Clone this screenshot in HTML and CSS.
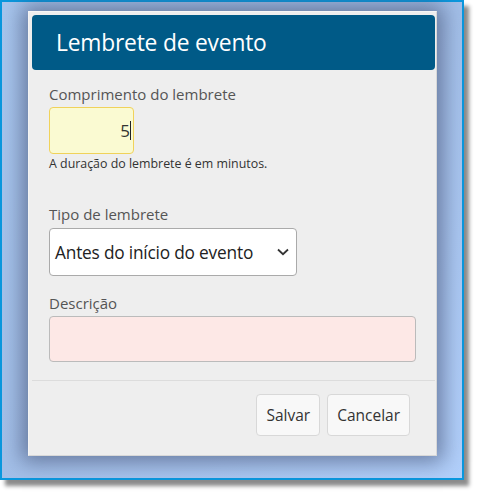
FILE: index.html
```html
<!DOCTYPE html>
<html lang="pt">
<head>
<meta charset="utf-8">
<title>Lembrete de evento</title>
<link rel="stylesheet" href="styles.css">
</head>
<body>
<div class="frame">
  <div class="dialog">
    <div class="dialog-header">Lembrete de evento</div>
    <div class="dialog-body">
      <label class="field-label">Comprimento do lembrete</label>
      <div class="num-input"><span class="num-value">5</span><span class="caret"></span></div>
      <div class="help">A duração do lembrete é em minutos.</div>
      <label class="field-label label-type">Tipo de lembrete</label>
      <div class="select">
        <span class="select-text">Antes do início do evento</span>
        <svg class="chevron" width="12" height="8" viewBox="0 0 12 8"><path d="M1 1.5 L6 6.2 L11 1.5" fill="none" stroke="#333" stroke-width="1.8"/></svg>
      </div>
      <label class="field-label label-desc">Descrição</label>
      <div class="textarea"></div>
    </div>
    <div class="separator"></div>
    <div class="dialog-footer">
      <button class="btn">Salvar</button>
      <button class="btn">Cancelar</button>
    </div>
  </div>
</div>
</body>
</html>
```

FILE: styles.css
```css
html, body {
  margin: 0;
  padding: 0;
  background: #ffffff;
}
body {
  font-family: "Open Sans", "Noto Sans", sans-serif;
  width: 478px;
  height: 494px;
  overflow: hidden;
}
.frame {
  box-sizing: border-box;
  width: 464px;
  height: 480px;
  border: 2px solid #0a98de;
  background: linear-gradient(135deg, #a8c6ee 0%, #a3bfe8 50%, #b2d0fb 100%);
  box-shadow: 5px 6px 4px rgba(0, 0, 0, 0.45);
  padding: 9px 0 0 26px;
}
.dialog {
  box-sizing: border-box;
  width: 409px;
  height: 445px;
  background: #eeeeee;
  border: 1px solid #d8d8d8;
  border-top-color: #f6f6f6;
  border-left-color: #f4f4f4;
  box-shadow: 0 0 20px 6px rgba(50, 60, 95, 0.55);
  padding: 3px 1px 0 3px;
}
.dialog-header {
  height: 55px;
  background: #005a87;
  border-radius: 4px;
  color: #ffffff;
  font-size: 22.8px;
  line-height: 55px;
  padding-left: 24px;
  letter-spacing: -0.2px;
}
.dialog-body {
  padding-left: 17px;
}
.field-label {
  display: block;
  font-size: 15px;
  line-height: 20px;
  color: #555555;
  margin-top: 14px;
}
.label-type { margin-top: 32px; }
.label-desc { margin-top: 17px; }
.num-input {
  box-sizing: border-box;
  margin-top: 3px;
  width: 85px;
  height: 47px;
  background: #fafad2;
  border: 1px solid #f0d25a;
  border-radius: 4px;
  display: flex;
  align-items: center;
  justify-content: flex-end;
  padding-right: 2px;
}
.num-value {
  font-size: 17px;
  color: #333333;
  line-height: 20px;
}
.caret {
  width: 1px;
  height: 19px;
  background: #222222;
}
.help {
  margin-top: 2px;
  font-size: 12.4px;
  line-height: 16px;
  color: #333333;
}
.select {
  box-sizing: border-box;
  margin-top: 4px;
  width: 248px;
  height: 48px;
  background: #ffffff;
  border: 1px solid #aaaaaa;
  border-radius: 4px;
  display: flex;
  align-items: center;
  justify-content: space-between;
  padding: 0 7px 0 5px;
}
.select-text {
  font-size: 17.3px;
  color: #222222;
  letter-spacing: -0.2px;
}
.textarea {
  box-sizing: border-box;
  margin-top: 3px;
  width: 367px;
  height: 46px;
  background: #fde8e6;
  border: 1px solid #bbbbbb;
  border-radius: 4px;
}
.separator {
  margin-top: 18px;
  height: 1px;
  background: #dcdcdc;
  width: 403px;
}
.dialog-footer {
  display: flex;
  justify-content: flex-end;
  gap: 7px;
  margin-top: 13px;
  padding-right: 25px;
}
.btn {
  box-sizing: border-box;
  height: 42px;
  background: #f8f8f8;
  border: 1px solid #d8d8d8;
  border-radius: 4px;
  font-family: "Open Sans", "Noto Sans", sans-serif;
  font-size: 15.5px;
  color: #333333;
  padding: 0 9px;
}
```
